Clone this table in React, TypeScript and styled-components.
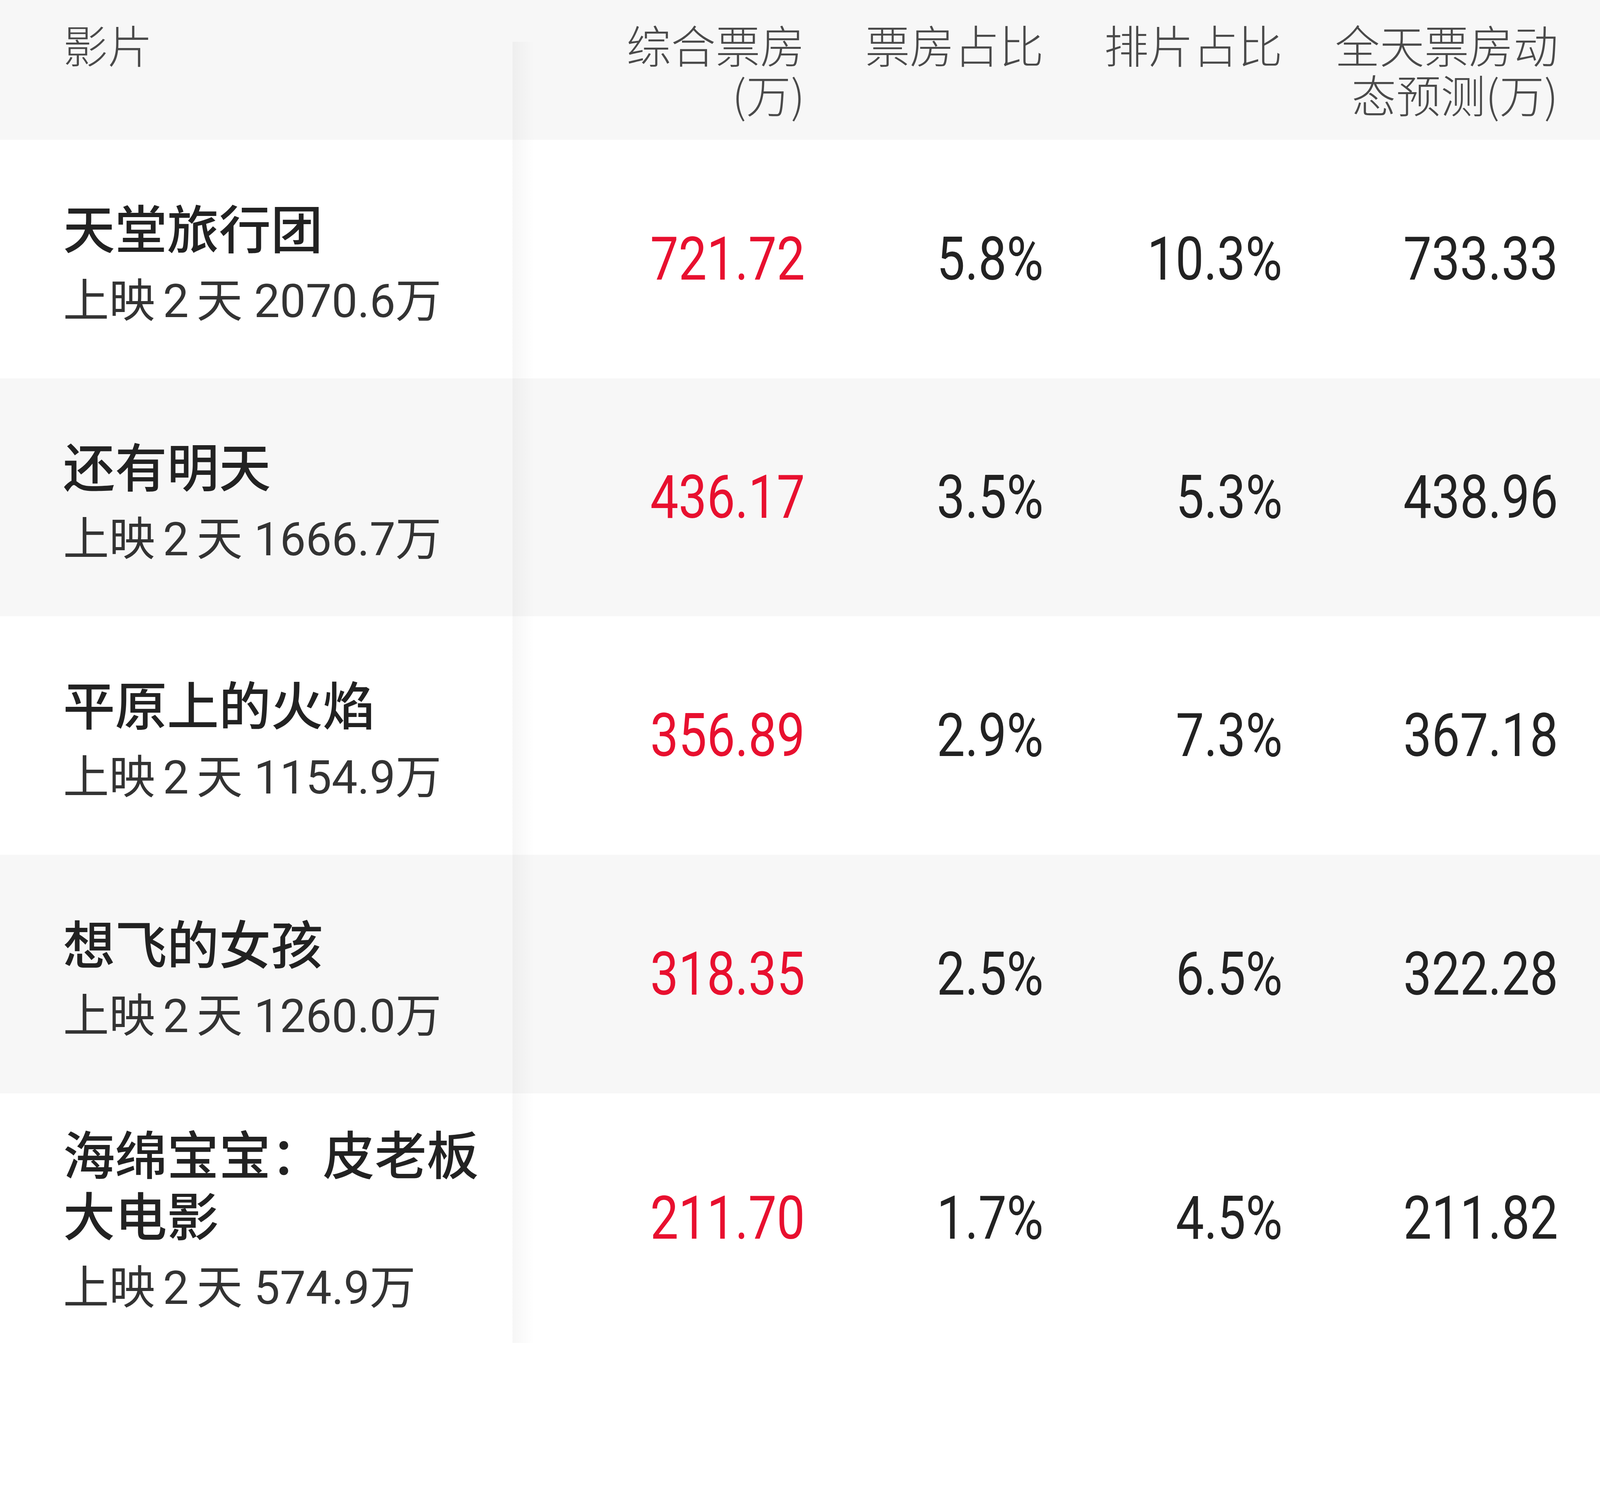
import * as React from 'react';
import styled, {createGlobalStyle} from 'styled-components';

// sizes are measured on the 4590px wide screenshot and expressed in vw
const u = (n: number) => `${(n / 45.9).toFixed(4)}vw`;

interface Film {
    name: string,
    days: number,
    total: string,
    boxOffice: string,
    boxShare: string,
    showShare: string,
    forecast: string,
}

const films: Film[] = [
    {name: '天堂旅行团', days: 2, total: '2070.6', boxOffice: '721.72', boxShare: '5.8%', showShare: '10.3%', forecast: '733.33'},
    {name: '还有明天', days: 2, total: '1666.7', boxOffice: '436.17', boxShare: '3.5%', showShare: '5.3%', forecast: '438.96'},
    {name: '平原上的火焰', days: 2, total: '1154.9', boxOffice: '356.89', boxShare: '2.9%', showShare: '7.3%', forecast: '367.18'},
    {name: '想飞的女孩', days: 2, total: '1260.0', boxOffice: '318.35', boxShare: '2.5%', showShare: '6.5%', forecast: '322.28'},
    {name: '海绵宝宝：皮老板大电影', days: 2, total: '574.9', boxOffice: '211.70', boxShare: '1.7%', showShare: '4.5%', forecast: '211.82'},
];

const rowHeights = [685, 682, 685, 685, 716];

const GlobalStyle = createGlobalStyle`
  html, body {
    margin: 0;
    padding: 0;
    background: #ffffff;
    overflow-x: hidden;
  }
  body {
    font-family: "Noto Sans CJK SC", "Noto Sans", sans-serif;
  }
`;

const Table = styled.div`
  width: 100vw;
  display: flex;
  flex-direction: column;
  overflow: hidden;
`;

const Row = styled.div<{ $alt?: boolean, $h?: number }>`
  display: grid;
  grid-template-columns: ${u(1470)} ${u(839)} ${u(685)} ${u(685)} ${u(791)};
  padding-right: ${u(120)};
  height: ${p => u(p.$h ?? 401)};
  background: ${p => p.$alt ? '#f7f7f7' : '#ffffff'};
  align-items: center;
`;

const HeadRow = styled(Row)`
  background: #f7f7f7;
  align-items: start;
`;

const NameCell = styled.div<{ $shadowTop?: number, $lift?: boolean }>`
  position: relative;
  align-self: stretch;
  display: flex;
  flex-direction: column;
  justify-content: center;
  padding: ${p => p.$lift ? 0 : u(16)} ${u(60)} 0 ${u(181)};

  &::after {
    content: '';
    position: absolute;
    top: ${p => u(p.$shadowTop ?? 0)};
    bottom: 0;
    right: -${u(64)};
    width: ${u(64)};
    background: linear-gradient(to right, rgba(0, 0, 0, 0.035), rgba(0, 0, 0, 0));
    pointer-events: none;
  }
`;

const HeadName = styled(NameCell)`
  justify-content: flex-start;
  padding-top: 0;
`;

const HeadLabel = styled.div<{ $left?: boolean }>`
  font-family: "Noto Sans CJK SC", sans-serif;
  font-weight: 300;
  font-size: ${u(128)};
  line-height: ${u(142)};
  color: #4a4a4a;
  text-align: ${p => p.$left ? 'left' : 'right'};
  padding-top: ${u(56)};
  white-space: nowrap;
`;

const Title = styled.div`
  font-family: "Noto Sans CJK SC", sans-serif;
  font-weight: 500;
  font-size: ${u(149)};
  line-height: ${u(176)};
  color: #222222;
`;

const Sub = styled.div`
  margin-top: ${u(53)};
  font-family: Roboto, "Noto Sans CJK SC", sans-serif;
  font-size: ${u(132)};
  line-height: ${u(150)};
  color: #333333;
  white-space: nowrap;
`;

const Value = styled.div<{ $red?: boolean }>`
  justify-self: end;
  font-family: Roboto, "Liberation Sans", sans-serif;
  font-size: ${u(172)};
  line-height: 1;
  color: ${p => p.$red ? '#e8102f' : '#222222'};
  white-space: nowrap;
  transform: scaleX(0.84);
  transform-origin: right center;
`;

const FilmRow = ({film, index}: { film: Film, index: number }) => (
    <Row $alt={index % 2 === 1} $h={rowHeights[index]}>
        <NameCell $lift={index === films.length - 1}>
            <Title>{film.name}</Title>
            <Sub>上映{'\u2006'}{film.days}{'\u2006'}天 {film.total}万</Sub>
        </NameCell>
        <Value $red>{film.boxOffice}</Value>
        <Value>{film.boxShare}</Value>
        <Value>{film.showShare}</Value>
        <Value>{film.forecast}</Value>
    </Row>
);

export default function App() {
    return (
        <>
            <GlobalStyle/>
            <Table>
                <HeadRow>
                    <HeadName $shadowTop={120}>
                        <HeadLabel $left>影片</HeadLabel>
                    </HeadName>
                    <HeadLabel>综合票房<br/>(万)</HeadLabel>
                    <HeadLabel>票房占比</HeadLabel>
                    <HeadLabel>排片占比</HeadLabel>
                    <HeadLabel>全天票房动<br/>态预测(万)</HeadLabel>
                </HeadRow>
                {films.map((f, i) => <FilmRow key={f.name} film={f} index={i}/>)}
            </Table>
        </>
    );
}
